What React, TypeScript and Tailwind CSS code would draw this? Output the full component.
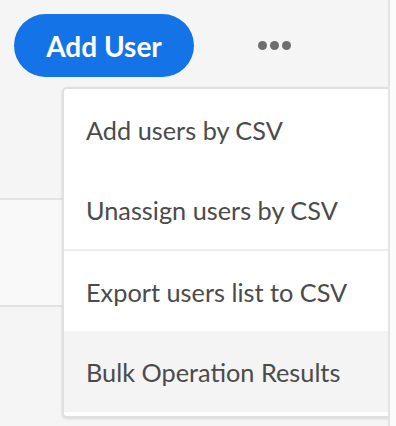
const items = ['Add users by CSV', 'Unassign users by CSV'];
const items2 = ['Export users list to CSV'];

const font = { fontFamily: 'Lato, "Open Sans", sans-serif' };

export default function App() {
  return (
    <div className="w-[396px] h-[426px] flex overflow-hidden bg-white" style={font}>
      <div className="relative w-[388px] h-full overflow-hidden bg-[#f5f5f5]">
        {/* header */}
        <div className="flex items-center pt-[14px] pl-[14px]">
          <button className="h-[63px] w-[180px] rounded-full bg-[#1473e6] text-white text-[28px] font-bold leading-none">
            Add User
          </button>
          <div className="ml-[64px] flex gap-[3px]">
            <span className="w-[9px] h-[9px] rounded-full bg-[#6e6e6e]" />
            <span className="w-[9px] h-[9px] rounded-full bg-[#6e6e6e]" />
            <span className="w-[9px] h-[9px] rounded-full bg-[#6e6e6e]" />
          </div>
        </div>

        {/* table rows behind */}
        <div className="mt-[121px] h-[109px] border-y-2 border-[#e2e2e2] bg-[#f9f9f9]" />

        {/* popover menu */}
        <div className="absolute left-[62px] top-[87px] w-[340px] h-[331px] rounded-[5px] border-2 border-[#e0e0e0] bg-white shadow-[0_1px_3px_rgba(0,0,0,0.12)] overflow-hidden">
          {items.map((t) => (
            <div key={t} className="h-[80px] flex items-center pt-[3px] px-[22px] text-[25.3px] text-[#4b4b4b]">
              {t}
            </div>
          ))}
          <div className="h-[2px] bg-[#ededed]" />
          {items2.map((t) => (
            <div key={t} className="h-[80px] flex items-center pt-[3px] px-[22px] text-[25.3px] text-[#4b4b4b]">
              {t}
            </div>
          ))}
          <div className="h-[81px] flex items-center pt-[3px] px-[22px] text-[25.3px] text-[#4b4b4b] bg-[#f4f4f4]">
            Bulk Operation Results
          </div>
        </div>
      </div>
      <div className="flex-1 border-l-2 border-[#e4e4e4] bg-[#fbfbfb]" />
    </div>
  );
}
